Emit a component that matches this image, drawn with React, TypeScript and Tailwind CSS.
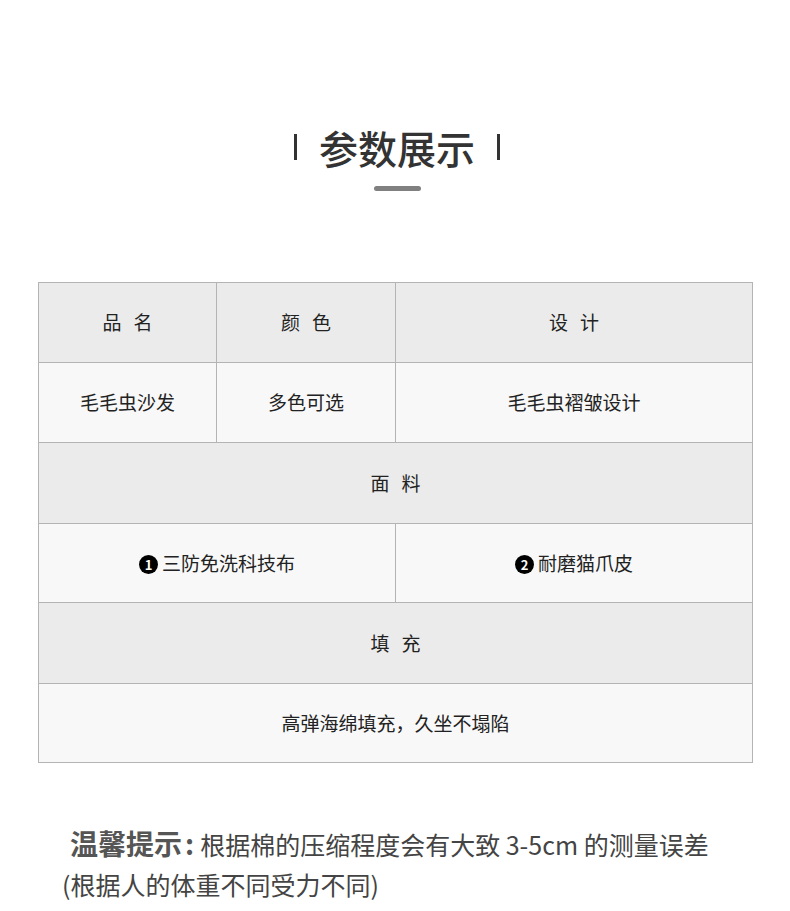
const font = '[font-family:"Noto_Sans_CJK_SC",sans-serif]'

function Num({ n }: { n: string }) {
  return (
    <span className="inline-flex w-[19px] h-[19px] rounded-full bg-black text-white text-[13px] font-bold items-center justify-center leading-none mr-[4px] align-middle relative -top-[1px]">
      {n}
    </span>
  )
}

function Spaced({ a, b }: { a: string; b: string }) {
  return (
    <span>
      {a}
      <span className="inline-block w-[12px]"></span>
      {b}
    </span>
  )
}

const head = 'bg-[#ebebeb] border border-[#b4b4b4] text-center text-[19px] text-[#222] font-normal'
const body = 'bg-[#f8f8f8] border border-[#b4b4b4] text-center text-[19px] text-[#222]'

export default function App() {
  return (
    <main className={`w-[790px] h-[911px] bg-white overflow-hidden ${font}`}>
      {/* 标题 */}
      <div className="pt-[120px] flex flex-col items-center">
        <div className="flex items-center gap-[22px] pl-[4px]">
          <span className="w-[3px] h-[26px] bg-[#333]"></span>
          <h1 className="text-[39px] font-medium text-[#333] leading-[54px]">参数展示</h1>
          <span className="w-[3px] h-[26px] bg-[#333]"></span>
        </div>
        <div className="mt-[12px] ml-[4px] w-[47px] h-[5px] rounded-full bg-[#808080]"></div>
      </div>

      {/* 参数表 */}
      <div className="mt-[91px] px-[38px]">
        <table className="w-[714px] border-collapse table-fixed">
          <colgroup>
            <col className="w-[178px]" />
            <col className="w-[179px]" />
            <col className="w-[178px]" />
            <col className="w-[179px]" />
          </colgroup>
          <tbody>
            <tr className="h-[80px]">
              <th className={head}><Spaced a="品" b="名" /></th>
              <th className={head}><Spaced a="颜" b="色" /></th>
              <th className={head} colSpan={2}><Spaced a="设" b="计" /></th>
            </tr>
            <tr className="h-[80px]">
              <td className={body}>毛毛虫沙发</td>
              <td className={body}>多色可选</td>
              <td className={body} colSpan={2}>毛毛虫褶皱设计</td>
            </tr>
            <tr className="h-[81px]">
              <th className={head} colSpan={4}><Spaced a="面" b="料" /></th>
            </tr>
            <tr className="h-[79px]">
              <td className={body} colSpan={2}>
                <Num n="1" />三防免洗科技布
              </td>
              <td className={body} colSpan={2}>
                <Num n="2" />耐磨猫爪皮
              </td>
            </tr>
            <tr className="h-[81px]">
              <th className={head} colSpan={4}><Spaced a="填" b="充" /></th>
            </tr>
            <tr className="h-[79px]">
              <td className={body} colSpan={4}>高弹海绵填充，久坐不塌陷</td>
            </tr>
          </tbody>
        </table>
      </div>

      {/* 温馨提示 */}
      <div className="mt-[59px] text-[#444]">
        <p className="pl-[70px] flex items-baseline">
          <span className="text-[28px] font-bold text-[#555]">温馨提示</span>
          <span className="text-[28px] font-bold text-[#555] ml-[3px]">:</span>
          <span className="text-[25px] ml-[6px]">根据棉的压缩程度会有大致 3-5cm 的测量误差</span>
        </p>
        <p className="pl-[62px] text-[25px] mt-[2px]">(根据人的体重不同受力不同)</p>
      </div>
    </main>
  )
}
